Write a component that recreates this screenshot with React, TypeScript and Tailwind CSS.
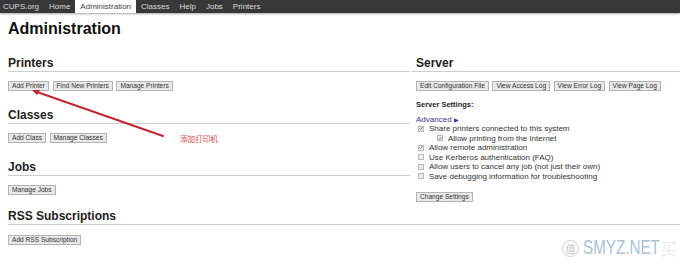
import React from "react";

function Btn({ children }: { children: React.ReactNode }) {
  return (
    <span className="inline-block h-[10px] border border-[#b3b3b3] bg-[#e8e8e8] px-[3px] text-[6.6px] leading-[8px] text-[#333] whitespace-nowrap">
      {children}
    </span>
  );
}

function H2({ children, className = "" }: { children: React.ReactNode; className?: string }) {
  return (
    <h2 className={`text-[12px] leading-[12px] font-bold text-[#222] pb-[2px] border-b border-[#cdcdcd] ${className}`}>
      {children}
    </h2>
  );
}

function Box({ checked }: { checked: boolean }) {
  return (
    <span className="inline-flex w-[6px] h-[6px] border border-[#b8b8b8] bg-[#eeeeee] items-center justify-center mr-[5px] shrink-0">
      {checked && (
        <svg width="5" height="5" viewBox="0 0 5 5">
          <path d="M0.7 2.5 L1.9 3.8 L4.3 0.9" stroke="#444" strokeWidth="0.9" fill="none" />
        </svg>
      )}
    </span>
  );
}

function Check({ checked, indent = false, children }: { checked: boolean; indent?: boolean; children: React.ReactNode }) {
  return (
    <div className={`flex items-center h-[9.5px] ${indent ? "ml-[21px]" : "ml-[2px]"}`}>
      <Box checked={checked} />
      <span className="whitespace-nowrap">{children}</span>
    </div>
  );
}

export default function App() {
  const nav = ["CUPS.org", "Home", "Administration", "Classes", "Help", "Jobs", "Printers"];
  return (
    <div
      className="relative w-[680px] h-[267px] overflow-hidden bg-white text-[#333]"
      style={{ fontFamily: '"Liberation Sans", Arial, sans-serif' }}
    >
      <div className="flex h-[13px] bg-[#383838] shadow-[0_1px_2px_rgba(0,0,0,0.35)] text-[8px] leading-[13px] text-[#dcdcdc]">
        {nav.map((n, i) => (
          <span
            key={n}
            className={`${i === 0 ? "pl-[3px] pr-[5px]" : "px-[5px]"} ${n === "Administration" ? "bg-white text-[#444]" : ""}`}
          >
            {n}
          </span>
        ))}
      </div>

      <h1 className="mt-[8px] px-[8px] text-[16px] leading-[16px] font-bold text-[#111]">Administration</h1>

      <div className="mt-[20px] pl-[8px] flex">
        <div className="w-[404px] shrink-0">
          <H2 className="mr-[2px]">Printers</H2>
          <div className="mt-[9px] flex gap-[3.5px]">
            <Btn>Add Printer</Btn>
            <Btn>Find New Printers</Btn>
            <Btn>Manage Printers</Btn>
          </div>
          <H2 className="mr-[2px] mt-[18px]">Classes</H2>
          <div className="mt-[9px] flex gap-[3.5px]">
            <Btn>Add Class</Btn>
            <Btn>Manage Classes</Btn>
          </div>
          <H2 className="mr-[2px] mt-[18px]">Jobs</H2>
          <div className="mt-[9px] flex gap-[3.5px]">
            <Btn>Manage Jobs</Btn>
          </div>
        </div>
        <div className="flex-1">
          <H2 className="pl-[4px]">Server</H2>
          <div className="pl-[4px]">
            <div className="mt-[9px] flex gap-[3.5px]">
              <Btn>Edit Configuration File</Btn>
              <Btn>View Access Log</Btn>
              <Btn>View Error Log</Btn>
              <Btn>View Page Log</Btn>
            </div>
            <div className="mt-[8.5px] text-[7.5px] leading-[10px] font-bold text-[#222]">Server Settings:</div>
            <div className="mt-[5px] text-[8px] leading-[9.5px] text-[#333]">
              <div className="h-[9.5px] text-[#33338c]">
                Advanced <span className="text-[6px]">▶</span>
              </div>
              <Check checked>Share printers connected to this system</Check>
              <Check checked indent>Allow printing from the Internet</Check>
              <Check checked>Allow remote administration</Check>
              <Check checked={false}>Use Kerberos authentication (FAQ)</Check>
              <Check checked={false}>Allow users to cancel any job (not just their own)</Check>
              <Check checked={false}>Save debugging information for troubleshooting</Check>
            </div>
            <div className="mt-[11px] flex">
              <Btn>Change Settings</Btn>
            </div>
          </div>
        </div>
      </div>

      <div className="mt-[8px] pl-[8px]">
        <H2>RSS Subscriptions</H2>
        <div className="mt-[10px] flex">
          <Btn>Add RSS Subscription</Btn>
        </div>
      </div>

      <svg className="absolute left-0 top-0 pointer-events-none" width="680" height="267" viewBox="0 0 680 267">
        <line x1="163" y1="136" x2="37" y2="92" stroke="#c3262e" strokeWidth="2" strokeLinecap="round" />
        <polygon points="32,90 40,90 37,95" fill="#c3262e" />
      </svg>
      <span
        className="absolute left-[180px] top-[134px] text-[7.6px] leading-[9px] text-[#d04545]"
        style={{ fontFamily: '"Noto Sans CJK SC", sans-serif' }}
      >
        添加打印机
      </span>

      <div className="absolute left-[562px] top-[240px] w-[17px] h-[17px] rounded-full border-[1.5px] border-[#cfcfcf] flex items-center justify-center text-[10px] text-[#c4c4c4]"
        style={{ fontFamily: '"Noto Sans CJK SC", sans-serif' }}>
        值
      </div>
      <span className="absolute left-[583px] top-[236px] text-[20px] leading-[22px] text-[#a9c2da] origin-left scale-x-[0.76] whitespace-nowrap">
        SMYZ.NET
      </span>
      <span className="absolute left-[660px] top-[238px] text-[17px] leading-[20px] text-[#ececec]"
        style={{ fontFamily: '"Noto Sans CJK SC", sans-serif' }}>
        买
      </span>
    </div>
  );
}
